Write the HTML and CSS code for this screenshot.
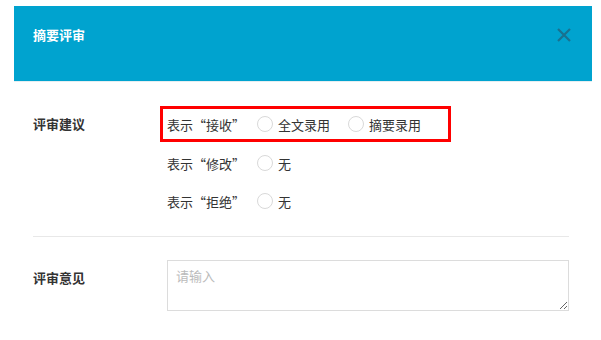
FILE: index.html
```html
<!DOCTYPE html>
<html lang="zh-CN">
<head>
    <meta charset="UTF-8">
    <meta name="viewport" content="width=device-width, initial-scale=1.0">
    <title>摘要评审</title>
    <link rel="stylesheet" href="styles.css">
</head>
<body>
    <div class="modal">
        <div class="modal-header">
            <span class="modal-title">摘要评审</span>
            <span class="close">
                <svg width="16" height="16" viewBox="0 0 16 16">
                    <path d="M2 2 L14 14 M14 2 L2 14" stroke="#19718f" stroke-width="2.2" fill="none"/>
                </svg>
            </span>
        </div>
        <div class="modal-body">
            <div class="form-item">
                <div class="form-label">评审建议</div>
                <div class="form-content">
                    <div class="option-row highlight">
                        <span class="option-name">表示“接收”</span>
                        <label class="radio"><span class="radio-dot"></span>全文录用</label>
                        <label class="radio"><span class="radio-dot"></span>摘要录用</label>
                    </div>
                    <div class="option-row">
                        <span class="option-name">表示“修改”</span>
                        <label class="radio"><span class="radio-dot"></span>无</label>
                    </div>
                    <div class="option-row">
                        <span class="option-name">表示“拒绝”</span>
                        <label class="radio"><span class="radio-dot"></span>无</label>
                    </div>
                </div>
            </div>
            <div class="divider"></div>
            <div class="form-item">
                <div class="form-label comment-label">评审意见</div>
                <div class="form-content">
                    <textarea class="comment" placeholder="请输入"></textarea>
                </div>
            </div>
        </div>
    </div>
</body>
</html>
```
FILE: styles.css
```css
body {
    margin: 0;
    padding: 0;
    background: white;
    font-family: "Noto Sans CJK SC", "Liberation Sans", sans-serif;
    font-size: 13px;
    color: #333;
}
.modal {
    width: 578px;
    margin: 6px 0 0 14px;
    background: white;
}
.modal-header {
    height: 76px;
    background: #00a3cf;
    border-bottom: 1px solid #e6eef1;
    padding: 20px 20px 0 19px;
    box-sizing: border-box;
    display: flex;
    justify-content: space-between;
    align-items: flex-start;
}
.modal-title {
    color: white;
    font-weight: bold;
    line-height: 18px;
}
.close {
    display: flex;
    margin-top: 1px;
}
.modal-body {
    padding: 24px 23px 0 19px;
}
.form-item {
    display: flex;
}
.form-label {
    width: 127px;
    flex-shrink: 0;
    font-weight: bold;
    color: #333;
    padding-top: 3px;
    line-height: 30px;
}
.form-content {
    flex: 1;
}
.option-row {
    display: flex;
    align-items: center;
    height: 30px;
    padding-left: 7px;
    margin-bottom: 8px;
}
.option-row.highlight {
    width: 281px;
    border: 3px solid #f00;
    padding-left: 4px;
    margin-bottom: 6px;
}
.option-name {
    width: 90px;
    color: #333;
}
.radio {
    display: flex;
    align-items: center;
    margin-right: 18px;
    color: #333;
}
.radio-dot {
    width: 14px;
    height: 14px;
    border: 1px solid #d9d9d9;
    border-radius: 50%;
    margin-right: 5px;
}
.divider {
    border-top: 1px solid #e8e8e8;
    margin-top: 12px;
}
.form-item + .divider + .form-item {
    margin-top: 23px;
}
.comment-label {
    padding-top: 3px;
}
.comment {
    display: block;
    margin-left: 7px;
    width: 402px;
    height: 51px;
    box-sizing: border-box;
    border: 1px solid #dcdcdc;
    padding: 6px 8px;
    font-family: inherit;
    font-size: 13px;
    line-height: 18px;
    color: #333;
    outline: none;
}
.comment::placeholder {
    color: #bbb;
}
```
